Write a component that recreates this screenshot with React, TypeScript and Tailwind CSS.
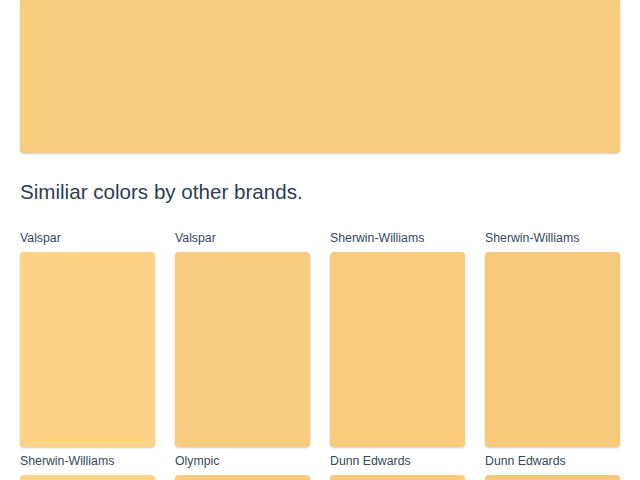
const similar = [
  { brand: 'Valspar', color: '#fdd487' },
  { brand: 'Valspar', color: '#f8cc80' },
  { brand: 'Sherwin-Williams', color: '#fbcb7c' },
  { brand: 'Sherwin-Williams', color: '#f7c97a' },
  { brand: 'Sherwin-Williams', color: '#fdd386' },
  { brand: 'Olympic', color: '#f8cb7e' },
  { brand: 'Dunn Edwards', color: '#fbcb7b' },
  { brand: 'Dunn Edwards', color: '#f6c879' },
]

export default function App() {
  return (
    <div className="min-h-screen bg-white px-5 pb-10 font-['Liberation_Sans',Arial,sans-serif] text-[#34495e]">
      <div className="h-[153px] rounded-b-[4px] bg-[#f8cd7f] shadow-[0_1px_2px_rgba(0,0,0,0.2)]" />

      <h2 className="mt-[25px] text-[20.6px] leading-[28px] text-[#2c3e50]">Similiar colors by other brands.</h2>

      <div className="mt-[23px] grid grid-cols-4 gap-x-5 gap-y-[5px]">
        {similar.map((s, i) => (
          <div key={i}>
            <div className="text-[12.3px] leading-[18px]">{s.brand}</div>
            <div
              className="mt-[5px] h-[195px] rounded-[4px] shadow-[0_1px_2px_rgba(0,0,0,0.2)]"
              style={{ backgroundColor: s.color }}
            />
          </div>
        ))}
      </div>
    </div>
  )
}
